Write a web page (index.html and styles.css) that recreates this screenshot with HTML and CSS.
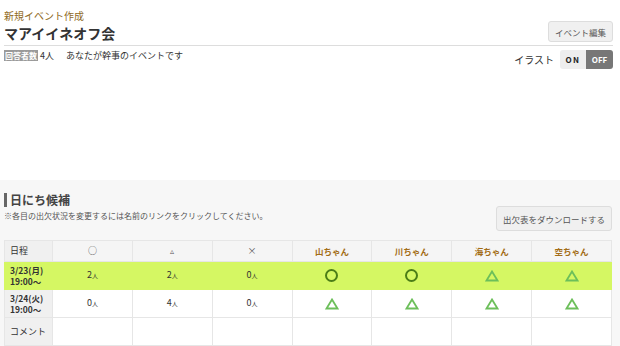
FILE: index.html
```html
<!DOCTYPE html>
<html lang="ja">
<head>
    <meta charset="UTF-8">
    <title>マアイイネオフ会</title>
    <link rel="stylesheet" href="styles.css">
</head>
<body>
    <div class="event-top">
        <div class="event-header">
            <div>
                <p class="event-sub">新規イベント作成</p>
                <h1 class="event-title">マアイイネオフ会</h1>
            </div>
            <button class="btn">イベント編集</button>
        </div>
        <div class="event-info">
            <div class="info-left">
                <span class="badge">回答者数</span>
                <span>4人</span>
                <span class="owner">あなたが幹事のイベントです</span>
            </div>
            <div class="info-right">
                <span>イラスト</span>
                <div class="toggle">
                    <span class="toggle-on">ON</span>
                    <span class="toggle-off">OFF</span>
                </div>
            </div>
        </div>
    </div>

    <div class="schedule">
        <div class="schedule-head">
            <div>
                <h2 class="section-title">日にち候補</h2>
                <p class="note">※各目の出欠状況を変更するには名前のリンクをクリックしてください。</p>
            </div>
            <button class="btn btn-download">出欠表をダウンロードする</button>
        </div>

        <table class="vote-table">
            <colgroup>
                <col class="col-date">
                <col><col><col><col><col><col><col>
            </colgroup>
            <tr class="head-row">
                <th class="date">日程</th>
                <th>○</th>
                <th class="small-mark">▵</th>
                <th>×</th>
                <th class="member">山ちゃん</th>
                <th class="member">川ちゃん</th>
                <th class="member">海ちゃん</th>
                <th class="member">空ちゃん</th>
            </tr>
            <tr class="best">
                <th class="date"><span class="line">3/23(月)</span><span class="line">19:00～</span></th>
                <td class="count">2<small>人</small></td>
                <td class="count">2<small>人</small></td>
                <td class="count">0<small>人</small></td>
                <td><span class="mark-ok"></span></td>
                <td><span class="mark-ok"></span></td>
                <td><svg class="mark-maybe" viewBox="0 0 14 12"><path d="M7 1.5 L12.5 10.5 H1.5 Z"/></svg></td>
                <td><svg class="mark-maybe" viewBox="0 0 14 12"><path d="M7 1.5 L12.5 10.5 H1.5 Z"/></svg></td>
            </tr>
            <tr>
                <th class="date"><span class="line">3/24(火)</span><span class="line">19:00～</span></th>
                <td class="count">0<small>人</small></td>
                <td class="count">4<small>人</small></td>
                <td class="count">0<small>人</small></td>
                <td><svg class="mark-maybe" viewBox="0 0 14 12"><path d="M7 1.5 L12.5 10.5 H1.5 Z"/></svg></td>
                <td><svg class="mark-maybe" viewBox="0 0 14 12"><path d="M7 1.5 L12.5 10.5 H1.5 Z"/></svg></td>
                <td><svg class="mark-maybe" viewBox="0 0 14 12"><path d="M7 1.5 L12.5 10.5 H1.5 Z"/></svg></td>
                <td><svg class="mark-maybe" viewBox="0 0 14 12"><path d="M7 1.5 L12.5 10.5 H1.5 Z"/></svg></td>
            </tr>
            <tr class="comment-row">
                <th class="date">コメント</th>
                <td></td><td></td><td></td><td></td><td></td><td></td><td></td>
            </tr>
        </table>
    </div>
</body>
</html>
```

FILE: styles.css
```css
* {
    margin: 0;
    padding: 0;
    box-sizing: border-box;
}

body {
    font-family: "Noto Sans CJK JP", "Noto Sans", sans-serif;
    color: #333;
    background: #f7f7f7;
    width: 620px;
    height: 346px;
    overflow: hidden;
}

.event-top {
    background: white;
    height: 180px;
    padding: 0 7px 0 4px;
}

.event-header {
    display: flex;
    justify-content: space-between;
    align-items: flex-end;
    border-bottom: 1px solid #ddd;
    padding-top: 9px;
    padding-bottom: 2px;
}

.event-sub {
    color: #8f6a1e;
    font-size: 10px;
    line-height: 14px;
}

.event-title {
    font-size: 14px;
    font-weight: 700;
    color: #333;
    line-height: 19px;
    margin-top: 1px;
}

.btn {
    font-family: inherit;
    font-size: 8.5px;
    color: #555;
    background: #f0f0f0;
    border: 1px solid #ddd;
    border-radius: 3px;
    height: 21px;
    padding: 0 6px;
    margin-bottom: 1px;
}

.event-info {
    display: flex;
    justify-content: space-between;
    align-items: flex-start;
    font-size: 9px;
    padding-top: 4px;
}

.info-left {
    display: flex;
    align-items: center;
    gap: 2px;
    line-height: 11px;
}

.badge {
    background: #9a9a9a;
    color: white;
    font-size: 8px;
    font-weight: 700;
    padding: 0 1px;
    line-height: 11px;
}

.owner {
    margin-left: 10px;
}

.info-right {
    display: flex;
    align-items: center;
    gap: 6px;
    font-size: 10px;
}

.toggle {
    display: flex;
    height: 19px;
    border-radius: 3px;
    overflow: hidden;
    font-size: 8px;
    font-weight: 700;
}

.toggle-on {
    width: 26px;
    background: #eeeeee;
    color: #222;
    letter-spacing: 1.5px;
    display: flex;
    align-items: center;
    justify-content: center;
}

.toggle-off {
    width: 27px;
    background: #777;
    color: white;
    display: flex;
    align-items: center;
    justify-content: center;
}

.schedule {
    padding: 0 8px 0 4px;
}

.schedule-head {
    display: flex;
    justify-content: space-between;
    align-items: flex-start;
    padding-top: 13px;
    margin-bottom: 9px;
}

.section-title {
    font-size: 12px;
    font-weight: 700;
    color: #444;
    border-left: 3px solid #666;
    padding-left: 3px;
    line-height: 14px;
}

.note {
    font-size: 8px;
    color: #555;
    margin-top: 3px;
}

.btn-download {
    height: 25px;
    padding: 0 6px;
    margin-top: 13px;
    margin-bottom: 0;
}

.vote-table {
    width: 608px;
    table-layout: fixed;
    border-collapse: collapse;
    background: white;
    font-size: 9px;
    line-height: 12px;
}

.col-date {
    width: 48px;
}

.vote-table th,
.vote-table td {
    border: 1px solid #e6e6e6;
    text-align: center;
    vertical-align: middle;
    font-weight: 400;
    padding: 0;
}

.head-row th {
    background: #f5f5f5;
    height: 21px;
    color: #555;
}

.head-row .member {
    color: #a36d16;
    font-weight: 700;
    font-size: 8.5px;
}

.small-mark {
    font-size: 8px;
}

.vote-table .date {
    background: #f0f0f0;
    text-align: left;
    padding-left: 5px;
    color: #333;
    font-weight: 700;
    font-size: 8.5px;
    white-space: nowrap;
    overflow: hidden;
}

.date .line {
    display: block;
    line-height: 11px;
}

.vote-table .head-row .date,
.comment-row .date {
    font-weight: 400;
    font-size: 9px;
}

.vote-table tr:not(.head-row) td,
.vote-table tr:not(.head-row) th {
    height: 28px;
}

.vote-table .comment-row td,
.vote-table .comment-row th {
    height: 20px;
}

.best td,
.best th.date {
    background: #d5f763;
    border-color: #d5f763;
}

.count {
    font-size: 9px;
}

.count small {
    font-size: 6px;
}

.mark-ok {
    display: inline-block;
    width: 13px;
    height: 13px;
    border: 2px solid #4b7d17;
    border-radius: 50%;
    vertical-align: middle;
}

.mark-maybe {
    width: 14px;
    height: 12px;
    vertical-align: middle;
    fill: none;
    stroke: #6cbf5a;
    stroke-width: 1.8;
}
```
